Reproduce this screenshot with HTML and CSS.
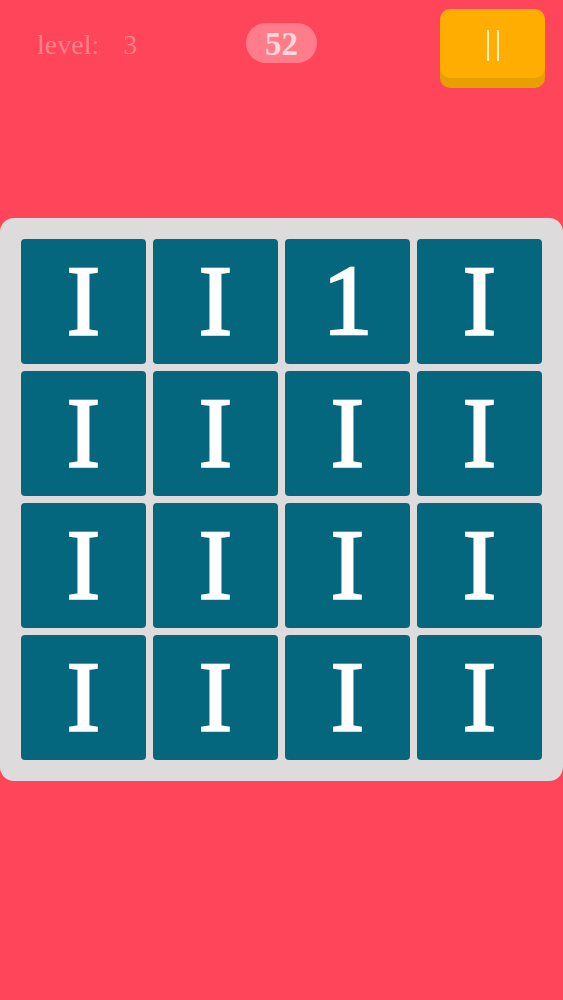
FILE: index.html
```html
<!DOCTYPE html>
<html>
<head>
<meta charset="utf-8">
<link rel="stylesheet" href="styles.css">
</head>
<body>
<div class="header">
  <div class="level">level:<span class="level-num">3</span></div>
  <div class="timer">52</div>
  <div class="pause"><span class="bar"></span><span class="bar"></span></div>
</div>
<div class="board">
  <div class="tile">I</div><div class="tile">I</div><div class="tile">1</div><div class="tile">I</div>
  <div class="tile">I</div><div class="tile">I</div><div class="tile">I</div><div class="tile">I</div>
  <div class="tile">I</div><div class="tile">I</div><div class="tile">I</div><div class="tile">I</div>
  <div class="tile">I</div><div class="tile">I</div><div class="tile">I</div><div class="tile">I</div>
</div>
</body>
</html>
```
FILE: styles.css
```css
html, body {
  margin: 0;
  padding: 0;
  background: #ff4559;
  font-family: "Liberation Serif", "Times New Roman", serif;
}
body {
  width: 563px;
  height: 1000px;
  overflow: hidden;
}
.header {
  display: flex;
  align-items: flex-start;
  padding: 9px 18px 0 37px;
  height: 79px;
}
.level {
  width: 209px;
  margin-top: 22px;
  font-size: 28px;
  line-height: 28px;
  color: rgba(255, 255, 255, 0.33);
  white-space: nowrap;
}
.level-num {
  margin-left: 24px;
}
.timer {
  width: 71px;
  height: 40px;
  margin-top: 14px;
  border-radius: 20px;
  background: rgba(255, 255, 255, 0.3);
  color: rgba(255, 255, 255, 0.7);
  font-weight: bold;
  font-size: 33px;
  line-height: 42px;
  text-align: center;
}
.pause {
  margin-left: auto;
  width: 105px;
  height: 69px;
  border-radius: 10px;
  background: #ffad00;
  box-shadow: 0 10px 0 #e89f00;
  display: flex;
  justify-content: center;
  align-items: center;
  gap: 8px;
}
.bar {
  width: 2px;
  height: 31px;
  background: #fff2c4;
  margin-top: 4px;
}
.board {
  margin-top: 130px;
  width: 563px;
  height: 563px;
  box-sizing: border-box;
  padding: 21px;
  background: #dddbdb;
  border-radius: 14px;
  display: grid;
  grid-template-columns: repeat(4, 125px);
  grid-template-rows: repeat(4, 125px);
  gap: 7px;
}
.tile {
  background: #04677e;
  border-radius: 4px;
  color: #ffffff;
  font-size: 100px;
  line-height: 100px;
  -webkit-text-stroke: 2.5px #ffffff;
  display: flex;
  justify-content: center;
  align-items: center;
  padding-bottom: 2px;
  box-sizing: border-box;
}
```
